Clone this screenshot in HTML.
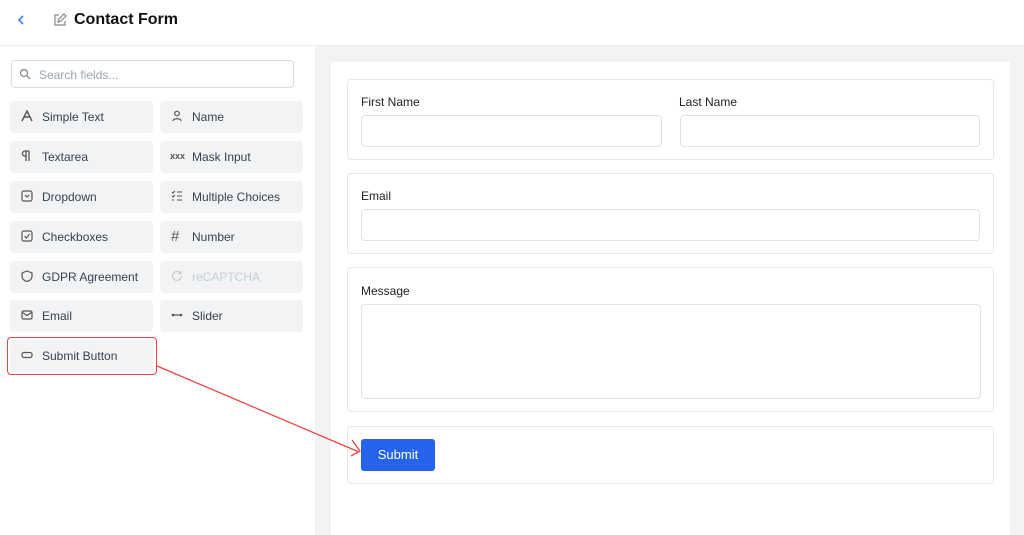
<!DOCTYPE html>
<html><head><style>
*{box-sizing:border-box;margin:0;padding:0}
body{width:1024px;height:535px;overflow:hidden;background:#fff;font-family:"Liberation Sans",sans-serif;position:relative;color:#1f2937}
.abs{position:absolute}
.hdr{left:0;top:0;width:1024px;height:46px;border-bottom:1px solid #eceef1;background:#fff}
.title{left:74px;top:11px;font-size:16px;font-weight:bold;color:#111}
.gray{left:315px;top:46px;width:709px;height:489px;background:#f2f3f5}
.panel{left:331px;top:62px;width:679px;height:473px;background:#fff}
.search{left:11px;top:60px;width:283px;height:28px;border:1px solid #d9dce1;border-radius:4px;font-size:12px;color:#9ca3af;padding:7px 0 0 27px}
.f{position:absolute;width:143px;height:32px;background:#f2f3f5;border-radius:4px;font-size:12px;color:#374151;padding:9px 0 0 32px}
.f svg{position:absolute;left:11px;top:9px}
.card{position:absolute;left:347px;width:647px;border:1px solid #e5e7eb;border-radius:4px;background:#fff}
.lbl{position:absolute;font-size:12px;color:#222}
.inp{position:absolute;border:1px solid #dfe2e6;border-radius:4px;background:#fff}
.btn{left:361px;top:439px;width:74px;height:32px;background:#2563eb;border-radius:3px;color:#fff;font-size:13px;text-align:center;line-height:32px}
</style></head><body>
<div class="abs hdr"></div>
<svg class="abs" style="left:16px;top:14px" width="10" height="12" viewBox="0 0 10 12"><path d="M7 2L3 6l4 4" stroke="#3b82f6" stroke-width="1.6" fill="none"/></svg>
<svg class="abs" style="left:53px;top:13px" width="14" height="14" viewBox="0 0 14 14"><path d="M6 2H2v10h10V8M5 9l1-3 5-5 2 2-5 5z" stroke="#888" stroke-width="1.2" fill="none"/></svg>
<div class="abs title">Contact Form</div>
<div class="abs gray"></div>
<div class="abs panel"></div>
<div class="abs search">Search fields...</div>
<svg class="abs" style="left:19px;top:68px" width="12" height="12" viewBox="0 0 12 12"><circle cx="5" cy="5" r="3.5" stroke="#888" stroke-width="1.3" fill="none"/><path d="M8 8l3 3" stroke="#888" stroke-width="1.3"/></svg>

<div class="f" style="left:10px;top:101px"><svg width="12" height="12" viewBox="0 0 12 12"><path d="M1 11L6 1l5 10M3 7h6" stroke="#555" stroke-width="1.4" fill="none"/></svg>Simple Text</div>
<div class="f" style="left:160px;top:101px"><svg width="12" height="12" viewBox="0 0 12 12"><circle cx="6" cy="3.5" r="2.3" stroke="#555" fill="none" stroke-width="1.2"/><path d="M2 11c0-3 8-3 8 0" stroke="#555" fill="none" stroke-width="1.2"/></svg>Name</div>
<div class="f" style="left:10px;top:141px"><svg width="12" height="12" viewBox="0 0 12 12"><path d="M5 1v10M8 1v10M8 1H4a2.5 2.5 0 000 5h1" stroke="#555" stroke-width="1.3" fill="none"/></svg>Textarea</div>
<div class="f" style="left:160px;top:141px"><span style="position:absolute;left:10px;top:10px;font-size:9px;font-weight:bold;color:#555">xxx</span>Mask Input</div>
<div class="f" style="left:10px;top:181px"><svg width="12" height="12" viewBox="0 0 12 12"><rect x="1" y="1" width="10" height="10" rx="2" stroke="#555" fill="none" stroke-width="1.2"/><path d="M4 5l2 2 2-2" stroke="#555" fill="none" stroke-width="1.2"/></svg>Dropdown</div>
<div class="f" style="left:160px;top:181px"><svg width="12" height="12" viewBox="0 0 12 12"><path d="M1 2l1 1 2-2M1 6l1 1 2-2M1 10h2M6 2h5M6 6h5M6 10h5" stroke="#555" fill="none" stroke-width="1.1"/></svg>Multiple Choices</div>
<div class="f" style="left:10px;top:221px"><svg width="12" height="12" viewBox="0 0 12 12"><rect x="1" y="1" width="10" height="10" rx="2" stroke="#555" fill="none" stroke-width="1.2"/><path d="M3.5 6l2 2 3-4" stroke="#555" fill="none" stroke-width="1.2"/></svg>Checkboxes</div>
<div class="f" style="left:160px;top:221px"><span style="position:absolute;left:11px;top:7px;font-size:15px;color:#555">#</span>Number</div>
<div class="f" style="left:10px;top:261px"><svg width="12" height="12" viewBox="0 0 12 12"><path d="M6 1l5 2v3c0 3-2.5 5-5 5.5C3.5 11 1 9 1 6V3z" stroke="#555" fill="none" stroke-width="1.2"/></svg>GDPR Agreement</div>
<div class="f" style="left:160px;top:261px;color:#c8ccd2"><svg width="12" height="12" viewBox="0 0 12 12"><path d="M10.5 6A4.5 4.5 0 116 1.5c1.5 0 2.8.7 3.6 1.8M10 1v2.5H7.5" stroke="#ccc" fill="none" stroke-width="1.2"/></svg>reCAPTCHA</div>
<div class="f" style="left:10px;top:300px"><svg width="12" height="12" viewBox="0 0 12 12"><rect x="1" y="2" width="10" height="8" rx="1.5" stroke="#555" fill="none" stroke-width="1.2"/><path d="M1.5 3.5L6 6.5l4.5-3" stroke="#555" fill="none" stroke-width="1.2"/></svg>Email</div>
<div class="f" style="left:160px;top:300px"><svg width="12" height="12" viewBox="0 0 12 12"><path d="M2 6h8" stroke="#555" stroke-width="1.2"/><circle cx="2" cy="6" r="1.3" fill="#555"/><circle cx="10" cy="6" r="1.3" fill="#555"/></svg>Slider</div>
<div class="abs" style="left:7px;top:337px;width:150px;height:38px;border:1.5px solid #ef4444;border-radius:4px"></div>
<div class="f" style="left:10px;top:340px"><svg width="12" height="12" viewBox="0 0 12 12"><rect x="1" y="3.5" width="10" height="5" rx="2" stroke="#555" fill="none" stroke-width="1.2"/></svg>Submit Button</div>

<div class="card" style="top:79px;height:81px"></div>
<div class="lbl" style="left:361px;top:95px">First Name</div>
<div class="lbl" style="left:679px;top:95px">Last Name</div>
<div class="inp" style="left:361px;top:115px;width:301px;height:32px"></div>
<div class="inp" style="left:680px;top:115px;width:300px;height:32px"></div>
<div class="card" style="top:173px;height:81px"></div>
<div class="lbl" style="left:361px;top:189px">Email</div>
<div class="inp" style="left:361px;top:209px;width:619px;height:32px"></div>
<div class="card" style="top:267px;height:145px"></div>
<div class="lbl" style="left:361px;top:284px">Message</div>
<div class="inp" style="left:361px;top:304px;width:620px;height:95px"></div>
<div class="card" style="top:426px;height:58px"></div>
<div class="abs btn">Submit</div>
<svg class="abs" style="left:0;top:0" width="1024" height="535"><path d="M157 366L359 452" stroke="#ef4444" stroke-width="1.3"/><path d="M352 440L360 451 351 456" stroke="#ef4444" stroke-width="1.3" fill="none"/></svg>
</body></html>
